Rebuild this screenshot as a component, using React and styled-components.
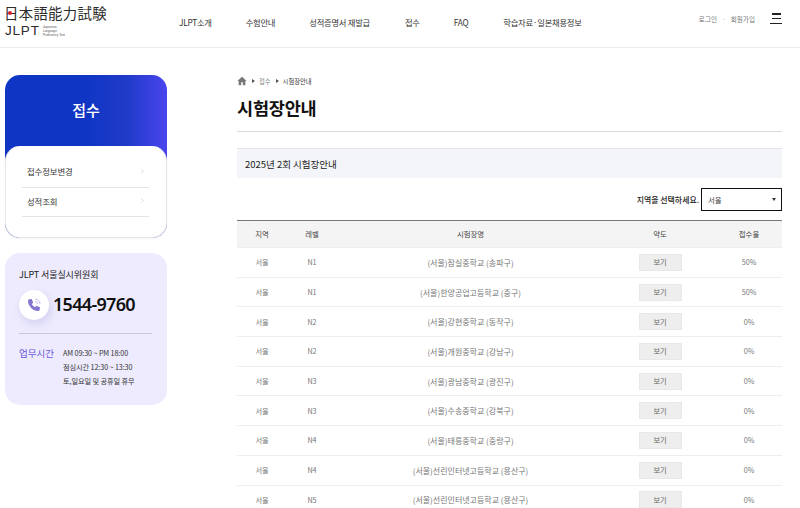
import React from "react";
import styled, { createGlobalStyle } from "styled-components";
import { ChevronRight } from "lucide-react";

const Global = createGlobalStyle`
  html, body { margin: 0; padding: 0; height: 508px; overflow: hidden; background: #fff; }
  body { font-family: "Noto Sans CJK KR", "Noto Sans", sans-serif; color: #222; }
  * { box-sizing: border-box; }
`;

const Page = styled.div`width: 800px; height: 508px; overflow: hidden;`;

const Header = styled.header`
  height: 48px; border-bottom: 1px solid #ececec; display: flex; align-items: flex-start; position: relative;
`;
const Logo = styled.div`
  width: 170px; padding: 5px 0 0 4px; display: flex; flex-direction: column; flex: none;
`;
const LogoCn = styled.div`
  font-family: "Noto Sans CJK JP", sans-serif; font-size: 14.4px; line-height: 16px; letter-spacing: 0.3px; color: #2c2c2c; position: relative; white-space: nowrap;
`;
const RedDot = styled.i`
  position: absolute; left: 4px; top: 6px; width: 4px; height: 4px; border-radius: 50%; background: #d8262c;
`;
const LogoRow = styled.div`display: flex; align-items: center; gap: 3px; margin-top: 3px;`;
const LogoEn = styled.div`
  font-family: "Liberation Sans", sans-serif; font-size: 13.5px; line-height: 14px; letter-spacing: 0.8px; color: #2c2c2c; padding-left: 1px;
`;
const LogoSmall = styled.div`
  font-family: "Liberation Sans", sans-serif; font-size: 3.2px; line-height: 4px; color: #555; width: 28px;
`;
const Nav = styled.nav`
  display: flex; padding-top: 16px; font-size: 8.3px; line-height: 12px; color: #333; flex: none;
`;
const NavItem = styled.a`
  margin-left: ${p => p.$ml}px; white-space: nowrap; letter-spacing: -0.25px;
`;
const Util = styled.div`
  margin-left: auto; display: flex; align-items: center; padding: 13px 18px 0 0; font-size: 6.6px; color: #777; line-height: 12px;
`;
const Dot = styled.span`margin: 0 5px; color: #aaa;`;
const Burger = styled.div`
  width: 12px; height: 11px; margin-left: 15px; display: flex; flex-direction: column; justify-content: space-between; align-items: flex-end;
  margin-top: -1px;
  i { display: block; height: 1.5px; background: #222; }
  i:nth-child(1) { width: 9px; align-self: center; }
  i:nth-child(2) { width: 9px; align-self: center; }
  i:nth-child(3) { width: 12px; }
`;

const Main = styled.div`display: flex; align-items: flex-start; padding: 27px 0 0 5px;`;
const Side = styled.aside`width: 162px; flex: none; display: flex; flex-direction: column; gap: 15px;`;
const MenuCard = styled.div`
  border-radius: 15px; height: 163px; position: relative;
  background: linear-gradient(90deg, #0f35c4 0%, #0f35c4 48%, #1f3bc8 75%, #4a45ee 100%);
  display: flex; flex-direction: column;
`;
const MenuTitle = styled.h2`
  margin: 0; height: 71px; display: flex; align-items: center; justify-content: center; padding-bottom: 3px;
  color: #fff; font-size: 15px; font-weight: 500;
`;
const MenuBody = styled.div`
  flex: 1; background: #fff; border-radius: 15px; padding: 12px 17px 0 16px;
  border: 1px solid #e6e6e6; border-top: 0; box-shadow: 0 1px 3px rgba(0,0,0,.05);
`;
const MenuItem = styled.div`
  height: 29.5px; display: flex; align-items: center; justify-content: space-between; border-bottom: 1.5px solid #e4e4e4;
  padding: 0 0 2px 5px; font-size: 8.4px; color: #333; letter-spacing: -0.1px;
  svg { color: #bbb; margin-right: 3px; }
`;
const Info = styled.div`
  background: #edebfd; border-radius: 15px; height: 152px; padding: 15px 15px 0 14px;
`;
const InfoName = styled.div`font-size: 9px; line-height: 13px; color: #222; font-weight: 400; letter-spacing: -0.1px;`;
const PhoneRow = styled.div`display: flex; align-items: center; gap: 4px; margin-top: 9px; padding-bottom: 13px; border-bottom: 1px solid #c9c8da;`;
const PhoneIcon = styled.div`
  width: 30px; height: 30px; border-radius: 50%; background: #fff; display: flex; align-items: center; justify-content: center;
  box-shadow: 2px 4px 8px rgba(110,100,190,.2);
`;
const PhoneNum = styled.div`font-family: "Noto Sans", sans-serif; font-size: 18px; font-weight: 600; letter-spacing: -0.7px; color: #111; line-height: 24px; margin-top: -3px;`;
const Hours = styled.div`display: flex; margin-top: 12px;`;
const HoursLabel = styled.div`font-size: 9.5px; width: 44px; flex: none; color: #6a55d8; line-height: 14px; font-weight: 400;`;
const HoursText = styled.div`font-size: 7.2px; line-height: 14px; color: #333; white-space: nowrap; letter-spacing: -0.1px;`;

const Content = styled.main`width: 545px; margin-left: 70px; flex: none;`;
const Crumb = styled.div`display: flex; align-items: center; height: 12px; font-size: 6.3px; color: #888; gap: 3px;`;
const Arrow = styled.span`
  width: 0; height: 0; border-left: 3px solid #555; border-top: 2px solid transparent; border-bottom: 2px solid transparent; margin: 0 1px 0 2px;
`;
const CrumbNow = styled.span`color: #333;`;
const Title = styled.h1`
  margin: 9px 0 0; height: 35px; font-size: 17.5px; line-height: 24px; font-weight: 700; color: #111; letter-spacing: -0.2px;
`;
const Rule = styled.div`height: 1px; background: #d8d8d8;`;
const SectionBar = styled.div`
  margin-top: 16px; height: 30px; background: #f4f5f9; border-top: 1px solid #e2e4ea; display: flex; align-items: center; padding: 0 8px;
  font-size: 9.5px; color: #222;
`;
const Filter = styled.div`display: flex; justify-content: flex-end; align-items: center; gap: 2px; margin-top: 10px; height: 23px; font-size: 7.9px; font-weight: 500; color: #222;`;
const Select = styled.div`
  width: 81px; height: 23px; border: 1.5px solid #111; display: flex; align-items: center; justify-content: space-between; padding: 0 5px 0 6px;
  font-size: 7.4px; font-weight: 400; color: #444;
`;
const Caret = styled.span`width: 0; height: 0; border-top: 3px solid #333; border-left: 2px solid transparent; border-right: 2px solid transparent;`;
const Table = styled.table`
  width: 545px; table-layout: fixed; border-collapse: collapse; margin-top: 9px; border-top: 1.5px solid #777;
`;
const Th = styled.th`
  height: 27px; background: #f5f4f4; font-size: 7.4px; font-weight: 400; color: #444; text-align: center; padding: 0 0 1px; width: ${p => p.$w}px;
`;
const Tr = styled.tr`height: 29.7px; border-bottom: 1px solid #eeeeee; &:first-child { border-top: 1px solid #eee; }`;
const Td = styled.td`
  text-align: center; padding: 0; color: #777; font-size: ${p => p.$big ? 8 : 7.2}px;
`;
const ViewBtn = styled.span`
  display: inline-flex; width: 43px; height: 17px; background: #eeeeee; border: 1px solid #e8e8e8; align-items: center; justify-content: center; font-size: 7.2px; color: #666; vertical-align: middle;
`;

const rows = [
  ["N1", "(서울)잠실중학교 (송파구)", "50%"],
  ["N1", "(서울)한양공업고등학교 (중구)", "50%"],
  ["N2", "(서울)강현중학교 (동작구)", "0%"],
  ["N2", "(서울)개원중학교 (강남구)", "0%"],
  ["N3", "(서울)광남중학교 (광진구)", "0%"],
  ["N3", "(서울)수송중학교 (강북구)", "0%"],
  ["N4", "(서울)태릉중학교 (중랑구)", "0%"],
  ["N4", "(서울)선린인터넷고등학교 (용산구)", "0%"],
  ["N5", "(서울)선린인터넷고등학교 (용산구)", "0%"],
];

const navs = [["JLPT소개", 0], ["수험안내", 34], ["성적증명서 재발급", 34], ["접수", 35], ["FAQ", 34], ["학습자료·일본채용정보", 35]];

export default function App() {
  return (
    <Page>
      <Global />
      <Header>
        <Logo>
          <LogoCn><RedDot />日本語能力試験</LogoCn>
          <LogoRow>
            <LogoEn>JLPT</LogoEn>
            <LogoSmall>Japanese-Language Proficiency Test</LogoSmall>
          </LogoRow>
        </Logo>
        <Nav>
          {navs.map(([t, m], i) => <NavItem key={t} $ml={i === 0 ? 9 : m}>{t}</NavItem>)}
        </Nav>
        <Util>
          <span>로그인</span><Dot>·</Dot><span>회원가입</span>
          <Burger><i /><i /><i /></Burger>
        </Util>
      </Header>
      <Main>
        <Side>
          <MenuCard>
            <MenuTitle>접수</MenuTitle>
            <MenuBody>
              <MenuItem>접수정보변경<ChevronRight size={7} /></MenuItem>
              <MenuItem>성적조회<ChevronRight size={7} /></MenuItem>
            </MenuBody>
          </MenuCard>
          <Info>
            <InfoName>JLPT 서울실시위원회</InfoName>
            <PhoneRow>
              <PhoneIcon>
                <svg width="16" height="16" viewBox="0 0 24 24" fill="none">
                  <path d="M5 3.5 8.5 3 11 8.5 8.8 10.6c.9 2 2.6 3.700 4.600 4.600L15.500 13 21 15.500 20.500 19c-.2 1.300-1.300 2-2.500 2C10.500 21 3 13.500 3 6c0-1.200.7-2.300 2-2.500z" fill="#8577cf" />
                  <path d="M14 6.500c2 .4 3.100 1.500 3.500 3.500M14.500 3c3.500.5 6 3 6.500 6.500" stroke="#b3aae3" strokeWidth="1.300" strokeLinecap="round" />
                </svg>
              </PhoneIcon>
              <PhoneNum>1544-9760</PhoneNum>
            </PhoneRow>
            <Hours>
              <HoursLabel>업무시간</HoursLabel>
              <HoursText>AM 09:30 ~ PM 18:00<br />점심시간 12:30 ~ 13:30<br />토,일요일 및 공휴일 휴무</HoursText>
            </Hours>
          </Info>
        </Side>
        <Content>
          <Crumb>
            <svg width="10" height="10" viewBox="0 0 24 24" fill="#777"><path d="M12 2 1 12h3v10h6v-7h4v7h6V12h3z" /></svg>
            <Arrow /><span>접수</span><Arrow /><CrumbNow>시험장안내</CrumbNow>
          </Crumb>
          <Title>시험장안내</Title>
          <Rule />
          <SectionBar>2025년 2회 시험장안내</SectionBar>
          <Filter>
            지역을 선택하세요.
            <Select>서울<Caret /></Select>
          </Filter>
          <Table>
            <thead>
              <tr>
                <Th $w={50}>지역</Th><Th $w={50}>레벨</Th><Th $w={267}>시험장명</Th><Th $w={112}>약도</Th><Th $w={66}>접수율</Th>
              </tr>
            </thead>
            <tbody>
              {rows.map((r, i) => (
                <Tr key={i}>
                  <Td>서울</Td><Td>{r[0]}</Td><Td $big>{r[1]}</Td><Td><ViewBtn>보기</ViewBtn></Td><Td>{r[2]}</Td>
                </Tr>
              ))}
            </tbody>
          </Table>
        </Content>
      </Main>
    </Page>
  );
}
